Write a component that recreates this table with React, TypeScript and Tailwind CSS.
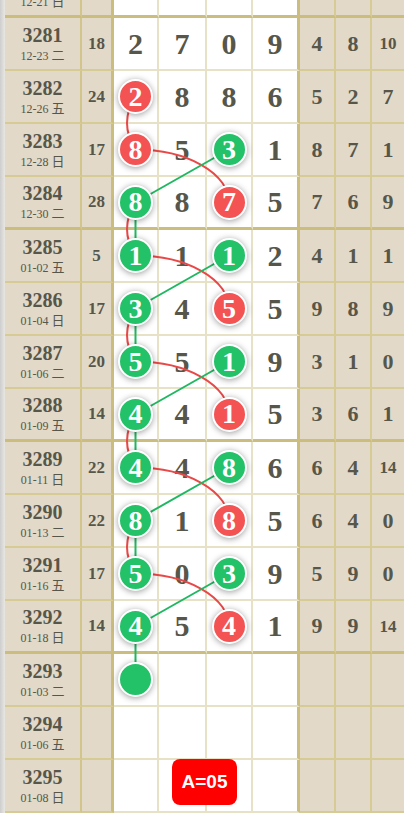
import React from "react";

type Row = { id: string; date: string; b: string; w: string[]; r: string[]; thick?: boolean; badge?: boolean };

const rows: Row[] = [
  { id: "3280", date: "12-21 日", b: "", w: ["", "", "", ""], r: ["", "", ""], thick: true },
  { id: "3281", date: "12-23 二", b: "18", w: ["2", "7", "0", "9"], r: ["4", "8", "10"] },
  { id: "3282", date: "12-26 五", b: "24", w: ["r2", "8", "8", "6"], r: ["5", "2", "7"] },
  { id: "3283", date: "12-28 日", b: "17", w: ["r8", "5", "g3", "1"], r: ["8", "7", "1"] },
  { id: "3284", date: "12-30 二", b: "28", w: ["g8", "8", "r7", "5"], r: ["7", "6", "9"], thick: true },
  { id: "3285", date: "01-02 五", b: "5", w: ["g1", "1", "g1", "2"], r: ["4", "1", "1"] },
  { id: "3286", date: "01-04 日", b: "17", w: ["g3", "4", "r5", "5"], r: ["9", "8", "9"] },
  { id: "3287", date: "01-06 二", b: "20", w: ["g5", "5", "g1", "9"], r: ["3", "1", "0"] },
  { id: "3288", date: "01-09 五", b: "14", w: ["g4", "4", "r1", "5"], r: ["3", "6", "1"], thick: true },
  { id: "3289", date: "01-11 日", b: "22", w: ["g4", "4", "g8", "6"], r: ["6", "4", "14"] },
  { id: "3290", date: "01-13 二", b: "22", w: ["g8", "1", "r8", "5"], r: ["6", "4", "0"] },
  { id: "3291", date: "01-16 五", b: "17", w: ["g5", "0", "g3", "9"], r: ["5", "9", "0"] },
  { id: "3292", date: "01-18 日", b: "14", w: ["g4", "5", "r4", "1"], r: ["9", "9", "14"], thick: true },
  { id: "3293", date: "01-03 二", b: "", w: ["g", "", "", ""], r: ["", "", ""] },
  { id: "3294", date: "01-06 五", b: "", w: ["", "", "", ""], r: ["", "", ""] },
  { id: "3295", date: "01-08 日", b: "", w: ["", "", "", ""], r: ["", "", ""], badge: true },
];

const whiteW = ["w-[45px]", "w-[48px]", "w-[46px]", "w-[47px]"];

function Ball({ v }: { v: string }) {
  const red = v[0] === "r";
  return (
    <div
      className={`relative z-10 flex h-[35px] w-[35px] items-center justify-center rounded-full border-2 border-white text-[28px] font-bold leading-none text-white shadow-[0_1px_6px_rgba(0,0,0,0.38)] ${
        red ? "bg-[#f35353]" : "bg-[#23c168]"
      }`}
    >
      {v.slice(1)}
    </div>
  );
}

function WhiteCell({ v, i, thick }: { v: string; i: number; thick?: boolean }) {
  const last = i === 3;
  const bottom = thick ? "border-b-[3px] border-b-[#cbbd7e]" : "border-b-2 border-b-[#e7e1c6]";
  const right = last ? "border-r-[3px] border-r-[#cbbd7e]" : "border-r-2 border-r-[#e7e1c6]";
  const isBall = v.startsWith("r") || v.startsWith("g");
  return (
    <div className={`flex h-full shrink-0 items-center justify-center bg-white ${whiteW[i]} ${bottom} ${right}`}>
      {isBall ? <Ball v={v} /> : <span className="text-[30px] font-bold leading-none text-[#56564a]">{v}</span>}
    </div>
  );
}

const Y = (r: number) => 18 + 53 * (r - 3281) + 25.5;
const X1 = 135.5;
const X3 = 229;

export default function App() {
  const redBows = [3282, 3284, 3286, 3288, 3290];
  const diag = [3283, 3285, 3287, 3289, 3291];
  const greenVert = [3284, 3286, 3288, 3290, 3292];
  return (
    <div className="relative h-[813px] w-[404px] overflow-hidden bg-[#e2d9c8] font-['Liberation_Serif','Noto_Sans_CJK_SC',serif]">
      <div className="flex">
        <div className="h-[813px] w-[5px] shrink-0 bg-linear-to-r from-[#cdcdcd] to-[#e9e7e2]" />
        <div className="-mt-[35px] flex flex-1 flex-col">
          {rows.map((row) => {
            const beigeB = row.thick ? "border-b-[3px] border-b-[#cbbd7e]" : "border-b-2 border-b-[#d6ca95]";
            return (
              <div key={row.id} className="relative flex h-[53px]">
                <div
                  className={`flex h-full w-[77px] shrink-0 flex-col items-center justify-center border-r-2 border-r-[#d2c58c] text-[#56564a] ${beigeB}`}
                >
                  <div className="text-[20px] font-bold leading-[22px]">{row.id}</div>
                  <div className="mt-[1px] text-[12px] leading-[16px]">
                    {row.date.split(" ")[0]} <span className="font-['Noto_Sans_CJK_SC',sans-serif] text-[13px]">{row.date.split(" ")[1]}</span>
                  </div>
                </div>
                <div
                  className={`flex h-full w-[32px] shrink-0 items-center justify-center border-r-[3px] border-r-[#cbbd7e] text-[17px] font-bold text-[#56564a] ${beigeB}`}
                >
                  {row.b}
                </div>
                {row.w.map((v, i) => (
                  <WhiteCell key={i} v={v} i={i} thick={row.thick} />
                ))}
                {row.r.map((v, i) => (
                  <div
                    key={i}
                    className={`flex h-full items-center justify-center font-bold leading-none text-[#56564a] ${
                      i === 2 ? "flex-1" : "w-[36px] shrink-0 border-r-2 border-r-[#d6ca95]"
                    } ${v.length > 1 ? "text-[17px]" : "text-[22px]"} ${beigeB}`}
                  >
                    {v}
                  </div>
                ))}
                {row.badge && (
                  <div className="absolute left-[167px] top-[-1px] z-20 flex h-[46px] w-[65px] items-center justify-center rounded-[8px] bg-[#ff0000] font-['Liberation_Sans',Arial,sans-serif] text-[19px] font-bold text-white">
                    A=05
                  </div>
                )}
              </div>
            );
          })}
        </div>
      </div>
      <svg className="pointer-events-none absolute left-0 top-0" width="404" height="813" viewBox="0 0 404 813">
        {redBows.map((r) => (
          <path key={"rb" + r} d={`M${X1} ${Y(r)} Q${X1 - 17} ${Y(r) + 26.5} ${X1} ${Y(r + 1)}`} stroke="#e94848" strokeWidth="2" fill="none" />
        ))}
        {diag.map((r) => (
          <path key={"ra" + r} d={`M${X1} ${Y(r)} A${X3 - X1} 53 0 0 1 ${X3} ${Y(r + 1)}`} stroke="#e94848" strokeWidth="2" fill="none" />
        ))}
        {greenVert.map((r) => (
          <line key={"gv" + r} x1={X1} y1={Y(r)} x2={X1} y2={Y(r + 1)} stroke="#1fb862" strokeWidth="2" />
        ))}
        {diag.map((r) => (
          <line key={"gd" + r} x1={X3} y1={Y(r)} x2={X1} y2={Y(r + 1)} stroke="#1fb862" strokeWidth="2" />
        ))}
      </svg>
    </div>
  );
}
